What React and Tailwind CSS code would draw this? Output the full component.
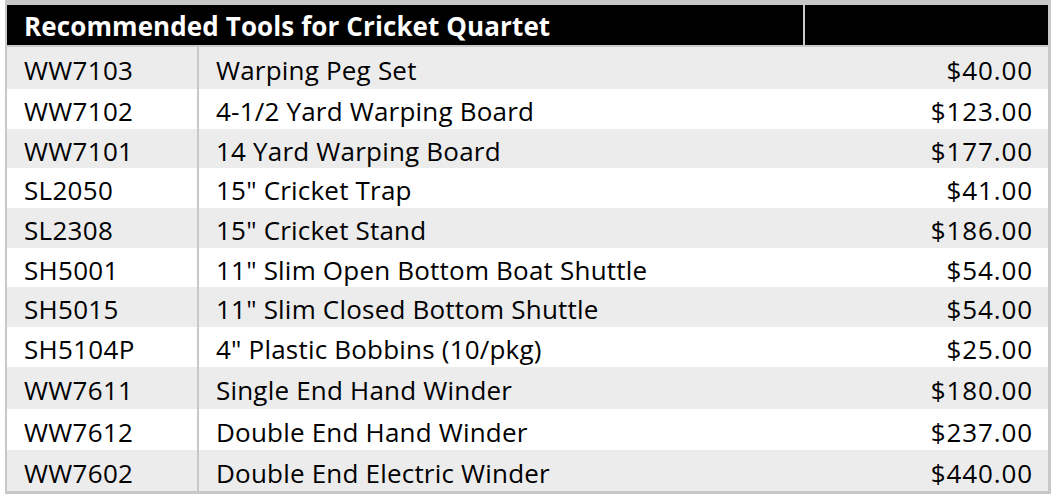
import React from "react";

const rows = [
  ["WW7103", "Warping Peg Set", "$40.00"],
  ["WW7102", "4-1/2 Yard Warping Board", "$123.00"],
  ["WW7101", "14 Yard Warping Board", "$177.00"],
  ["SL2050", "15\" Cricket Trap", "$41.00"],
  ["SL2308", "15\" Cricket Stand", "$186.00"],
  ["SH5001", "11\" Slim Open Bottom Boat Shuttle", "$54.00"],
  ["SH5015", "11\" Slim Closed Bottom Shuttle", "$54.00"],
  ["SH5104P", "4\" Plastic Bobbins (10/pkg)", "$25.00"],
  ["WW7611", "Single End Hand Winder", "$180.00"],
  ["WW7612", "Double End Hand Winder", "$237.00"],
  ["WW7602", "Double End Electric Winder", "$440.00"],
];

// row heights read off the screenshot (not quite even)
const heights = ["h-[42px]", "h-[40px]", "h-[39px]", "h-[40px]", "h-[40px]", "h-[39px]", "h-[40px]", "h-[40px]", "h-[42px]", "h-[41px]", "h-[41px]"];

export default function App() {
  return (
    <div className="w-[1056px] h-[496px] bg-white pl-[5px] font-['Open_Sans',sans-serif] text-black">
      <div className="w-[1046px] border-[#c8c8c8] border-l-2 border-r-[3px] border-t-[5px] border-b-[3px]">
        <div className="flex h-[40px] bg-black text-white font-bold text-[26px]">
          <div className="w-[798px] border-r-2 border-[#c8c8c8] pl-[17px] pt-[2px] tracking-[0.1px] flex items-center">
            Recommended Tools for Cricket Quartet
          </div>
          <div className="flex-1" />
        </div>
        <div className="h-[2px] bg-[#c8c8c8]" />
        {rows.map(([code, name, price], i) => (
          <div
            key={code}
            className={
              "flex items-center text-[26px] " +
              heights[i] +
              (i % 2 === 0 ? " bg-[#ececec]" : " bg-white")
            }
          >
            <div className="w-[192px] h-full border-r-2 border-[#c8c8c8] pl-[17px] pt-[5px] tracking-[0.3px] flex items-center">{code}</div>
            <div className="flex-1 pl-[17px] pt-[5px] tracking-[0.2px]">{name}</div>
            <div className="pr-[15px] pt-[5px] text-right tracking-[0.9px]">{price}</div>
          </div>
        ))}
      </div>
    </div>
  );
}
